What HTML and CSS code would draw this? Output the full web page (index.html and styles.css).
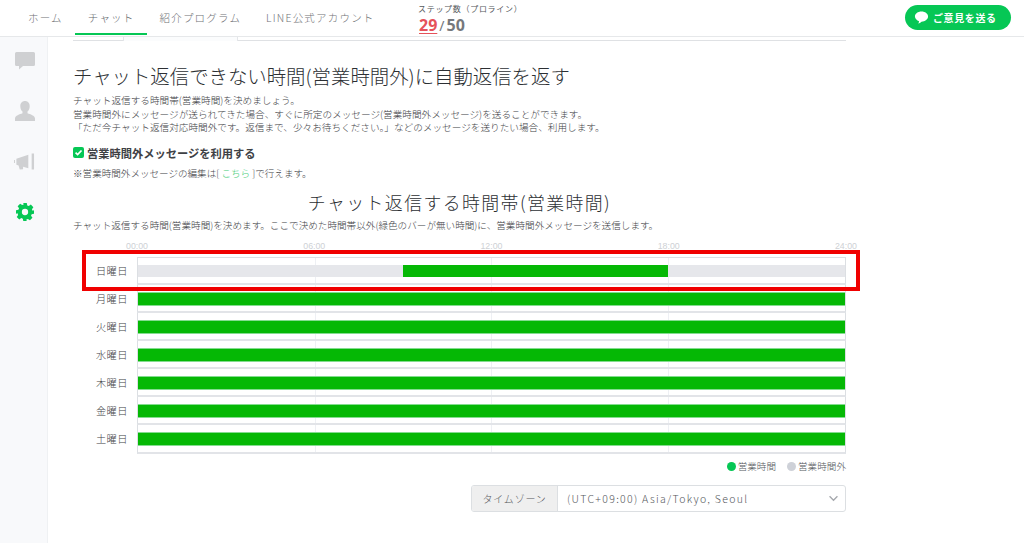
FILE: index.html
```html
<!DOCTYPE html>
<html lang="ja">
<head>
<meta charset="utf-8">
<title>チャット返信</title>
<link rel="stylesheet" href="styles.css">
</head>
<body>
<header class="topbar">
  <nav class="tabs">
    <a class="tab t-home">ホーム</a>
    <a class="tab t-chat active">チャット</a>
    <a class="tab t-ref">紹介プログラム</a>
    <a class="tab t-line">LINE公式アカウント</a>
  </nav>
  <div class="steps">
    <div class="steps-label">ステップ数（プロライン）</div>
    <div class="steps-count"><span class="used">29</span><span class="slash">/</span><span class="max">50</span></div>
  </div>
  <a class="feedback">
    <svg class="feedback-icon" viewBox="0 0 16 16"><path fill="#fff" d="M8 1.500c3.900 0 7 2.400 7 5.500 0 3-3.200 5.400-7 5.500-.8.800-2.200 1.800-3.600 2 .6-.8 1-1.700 1-2.500C3 11.200 1 9.300 1 7c0-3.100 3.100-5.500 7-5.500z"/></svg>
    <span>ご意見を送る</span>
  </a>
</header>
<div class="shell">
  <aside class="sidebar">
    <svg class="side-icon i-chat" viewBox="0 0 20 18"><path fill="#cfd0d2" d="M1.500 0h17A1.500 1.500 0 0 1 20 1.500v11a1.500 1.500 0 0 1-1.500 1.500H8l-4 3.500V14H1.500A1.500 1.500 0 0 1 0 12.500v-11A1.500 1.500 0 0 1 1.500 0z"/></svg>
    <svg class="side-icon i-user" viewBox="0 0 20 20"><path fill="#cfd0d2" d="M10 0c2.900 0 4.700 2.100 4.700 5.200 0 2.300-1 4.300-2.200 5.400v1.600c2.700 1 7.500 2.300 7.500 5.300V20H0v-2.500c0-3 4.800-4.300 7.500-5.300v-1.600C6.300 9.500 5.300 7.500 5.300 5.200 5.300 2.100 7.100 0 10 0z"/></svg>
    <svg class="side-icon i-mega" viewBox="0 0 22 17"><path fill="#cfd0d2" d="M0 7h1v3H0zM2.500 5.500 15 1.500v14L9.500 14v2.500l-3.500.5-1.200-4.200-2.300-.8zM18.500 0H21v17h-2.500z"/></svg>
    <svg class="side-icon i-gear" viewBox="0 0 20 20"><path fill="#06c755" fill-rule="evenodd" d="M8 0h4l.5 2.700 1.700.7 2.300-1.600 2.800 2.800-1.600 2.300.7 1.700L20 8v4l-2.600.5-.7 1.700 1.600 2.300-2.800 2.800-2.300-1.600-1.700.7L11.900 20H8.100l-.5-2.600-1.700-.7-2.300 1.600-2.800-2.800 1.600-2.300-.7-1.700L0 12V8l2.700-.5.700-1.700-1.600-2.300 2.800-2.800 2.300 1.600 1.700-.7zM10 6.500a3.500 3.500 0 1 0 0 7 3.500 3.500 0 0 0 0-7z"/></svg>
  </aside>
  <main class="content">
    <div class="tabs-rest">
      <span class="rest-a"></span>
      <span class="rest-b"></span>
      <span class="rest-c"></span>
    </div>
    <h1 class="title">チャット返信できない時間(営業時間外)に自動返信を返す</h1>
    <p class="desc">チャット返信する時間帯(営業時間)を決めましょう。<br>営業時間外にメッセージが送られてきた場合、すぐに所定のメッセージ(営業時間外メッセージ)を送ることができます。<br>「ただ今チャット返信対応時間外です。返信まで、少々お待ちください。」などのメッセージを送りたい場合、利用します。</p>
    <label class="check">
      <span class="box"><svg viewBox="0 0 12 12"><path fill="none" stroke="#fff" stroke-width="1.800" d="M2.800 6.200 5 8.300 9.300 3.800"/></svg></span>
      <span>営業時間外メッセージを利用する</span>
    </label>
    <p class="note">※営業時間外メッセージの編集は[ <a class="link">こちら</a> ]で行えます。</p>
    <h2 class="subtitle">チャット返信する時間帯(営業時間)</h2>
    <p class="sub-desc">チャット返信する時間(営業時間)を決めます。ここで決めた時間帯以外(緑色のバーが無い時間)に、営業時間外メッセージを送信します。</p>

    <section class="schedule">
      <div class="hours">
        <span>00:00</span><span>06:00</span><span>12:00</span><span>18:00</span><span>24:00</span>
      </div>
      <div class="rows">
        <div class="row"><span class="day">日曜日</span><div class="cell"><div class="track off"><div class="fill" style="margin-left:37.5%;width:37.5%"></div></div></div></div>
        <div class="row"><span class="day">月曜日</span><div class="cell"><div class="track"><div class="fill full"></div></div></div></div>
        <div class="row"><span class="day">火曜日</span><div class="cell"><div class="track"><div class="fill full"></div></div></div></div>
        <div class="row"><span class="day">水曜日</span><div class="cell"><div class="track"><div class="fill full"></div></div></div></div>
        <div class="row"><span class="day">木曜日</span><div class="cell"><div class="track"><div class="fill full"></div></div></div></div>
        <div class="row"><span class="day">金曜日</span><div class="cell"><div class="track"><div class="fill full"></div></div></div></div>
        <div class="row"><span class="day">土曜日</span><div class="cell"><div class="track"><div class="fill full"></div></div></div></div>
      </div>
      <div class="highlight"></div>
    </section>

    <div class="legend">
      <span class="legend-item"><i class="dot on"></i>営業時間</span>
      <span class="legend-item"><i class="dot out"></i>営業時間外</span>
    </div>

    <div class="tz">
      <div class="tz-label">タイムゾーン</div>
      <div class="tz-value">
        <span class="tz-text">(UTC+09:00) Asia/Tokyo, Seoul</span>
        <svg class="chev" viewBox="0 0 12 8"><path fill="none" stroke="#a5a8ad" stroke-width="1.500" d="M1.500 1.500 6 6l4.500-4.500"/></svg>
      </div>
    </div>
  </main>
</div>
</body>
</html>
```

FILE: styles.css
```css
* { box-sizing: border-box; }
html, body { margin: 0; height: 100%; }
body {
  background: #fff;
  color: #3c3f44;
  font-family: "Noto Sans CJK JP", "Noto Sans", sans-serif;
  font-weight: 300;
  overflow: hidden;
}
p, h1, h2 { margin: 0; }

.topbar {
  height: 37px;
  display: flex;
  align-items: flex-start;
  border-bottom: 1px solid #e6e8ea;
  position: relative;
}
.tabs { display: flex; width: 414px; height: 36px; padding-left: 28px; }
.tab {
  font-size: 10.500px;
  line-height: 35px;
  letter-spacing: 1.200px;
  color: #6f7276;
  white-space: nowrap;
}
.t-home { margin-right: 25px; }
.t-chat { margin-right: 25px; }
.t-ref { margin-right: 25px; }
.tab.active { color: #65686c; position: relative; }
.tab.active::after {
  content: "";
  position: absolute;
  left: -13px;
  right: -12px;
  bottom: 1px;
  height: 2px;
  background: #06c755;
}
.steps { width: 300px; padding-left: 4px; padding-top: 3px; }
.steps-label { font-size: 8px; line-height: 11px; letter-spacing: 0.700px; color: #55585c; white-space: nowrap; font-weight: 400; }
.steps-count { font-family: "Noto Sans", sans-serif; font-size: 16px; line-height: 22px; font-weight: 700; color: #75787c; padding-left: 1px; }
.used { color: #e5525a; text-decoration: underline; text-underline-offset: 2px; text-decoration-thickness: 1px; }
.slash { font-weight: 400; font-size: 14px; margin: 0 2px; }
.feedback {
  position: absolute;
  left: 905px;
  top: 5px;
  width: 106px;
  height: 25px;
  border-radius: 13px;
  background: #06c755;
  color: #fff;
  font-size: 10px;
  font-weight: 700;
  letter-spacing: 0.600px;
  display: flex;
  align-items: center;
  gap: 4px;
  padding-left: 9px;
}
.feedback-icon { width: 15px; height: 15px; }

.shell { display: flex; height: 506px; }
.sidebar {
  width: 48px;
  flex: none;
  background: #f8f9fb;
  border-right: 1px solid #eff1f3;
  display: flex;
  flex-direction: column;
  align-items: center;
  padding-top: 15px;
  padding-left: 2px;
}
.side-icon { display: block; flex: none; }
.i-chat { width: 20px; height: 18px; margin-bottom: 31px; }
.i-user { width: 20px; height: 20px; margin-bottom: 32px; }
.i-mega { width: 21px; height: 17px; margin-bottom: 33px; }
.i-gear { width: 18px; height: 18px; }

.content { width: 798px; padding-left: 25px; flex: none; }
.tabs-rest { display: flex; height: 4px; }
.tabs-rest span { display: block; height: 4px; }
.rest-a { width: 50px; border-bottom: 1px solid #dfe1e4; }
.rest-b { width: 115px; background: #fbfcfd; border-right: 1px solid #e4e6e9; border-left: 1px solid #e4e6e9; }
.rest-c { flex: 1; border-bottom: 1px solid #dfe1e4; }

.title {
  margin-top: 21px;
  font-size: 19.400px;
  line-height: 28px;
  font-weight: 300;
  color: #2c2f33;
  white-space: nowrap;
}
.desc {
  margin-top: 4px;
  font-size: 9.650px;
  line-height: 13.500px;
  color: #3e4145;
  white-space: nowrap;
}
.check {
  margin-top: 10px;
  display: flex;
  align-items: center;
  gap: 3px;
  font-size: 11.250px;
  line-height: 16px;
  font-weight: 700;
  color: #3e4145;
}
.box {
  width: 11px;
  height: 11px;
  border-radius: 2px;
  background: #06c755;
  display: block;
}
.box svg { display: block; width: 11px; height: 11px; }
.note { margin-top: 5px; font-size: 9.570px; line-height: 14px; color: #3e4145; white-space: nowrap; }
.link { color: #3ecb73; }
.subtitle {
  margin-top: 9px;
  text-align: center;
  font-size: 17.900px;
  line-height: 26px;
  font-weight: 300;
  letter-spacing: 1.400px;
  color: #2c2f33;
}
.sub-desc { margin-top: 3px; font-size: 9.600px; line-height: 14px; color: #3e4145; white-space: nowrap; }

.schedule { position: relative; margin-top: 9px; }
.hours {
  display: flex;
  justify-content: space-between;
  margin-left: 53px;
  margin-right: -11px;
  height: 11px;
  font-family: "Liberation Sans", sans-serif;
  font-size: 8.800px;
  font-weight: 400;
  line-height: 11px;
  color: #ced1d5;
}
.rows { margin-top: 5px; }
.row { display: flex; height: 28.170px; }
.day {
  width: 64px;
  flex: none;
  padding-right: 9px;
  text-align: right;
  font-size: 10.200px;
  line-height: 27px;
  letter-spacing: 0.500px;
  color: #3e4145;
  white-space: nowrap;
}
.cell {
  flex: 1;
  padding-top: 8px;
  border-left: 1px solid #dcdfe3;
  border-right: 1px solid #dcdfe3;
  border-bottom: 2px solid #e2e4e8;
  background:
    linear-gradient(#eef0f4, #eef0f4) 25% 0 / 1px 100% no-repeat,
    linear-gradient(#eef0f4, #eef0f4) 50% 0 / 1px 100% no-repeat,
    linear-gradient(#eef0f4, #eef0f4) 75% 0 / 1px 100% no-repeat;
}
.row:first-child .cell { border-top: 1px solid #dcdfe3; padding-top: 7px; }
.track { height: 12px; }
.track.off { background: #e6e7eb; }
.fill { height: 12px; background: #05b805; box-shadow: 0 1px 0 #84dc90, 0 -1px 0 #84dc90; }
.track.off .fill { box-shadow: none; }
.fill.full { width: 100%; }
.highlight {
  position: absolute;
  left: 9px;
  top: 9px;
  width: 778px;
  height: 41px;
  border: 4px solid #f00000;
  pointer-events: none;
}

.legend {
  margin-top: 6px;
  display: flex;
  justify-content: flex-end;
  gap: 11px;
  font-size: 9.600px;
  line-height: 13px;
  color: #55585c;
}
.legend-item { display: flex; align-items: center; gap: 2px; }
.dot { width: 9px; height: 9px; border-radius: 50%; display: block; }
.dot.on { background: #06c755; }
.dot.out { background: #ced1d8; }

.tz {
  margin-top: 12px;
  margin-left: 398px;
  width: 375px;
  height: 27px;
  display: flex;
  border: 1px solid #dcdfe2;
  border-radius: 3px;
  overflow: hidden;
  font-size: 10px;
  line-height: 25px;
  color: #55585c;
  letter-spacing: 0.800px;
}
.tz-label {
  width: 86px;
  flex: none;
  text-align: center;
  background: #efefef;
  border-right: 1px solid #dcdfe2;
}
.tz-value {
  flex: 1;
  display: flex;
  justify-content: space-between;
  align-items: center;
  padding: 0 6px 0 9px;
}
.tz-text { font-size: 10.500px; letter-spacing: 1.300px; }
.chev { width: 11px; height: 7px; }
```
